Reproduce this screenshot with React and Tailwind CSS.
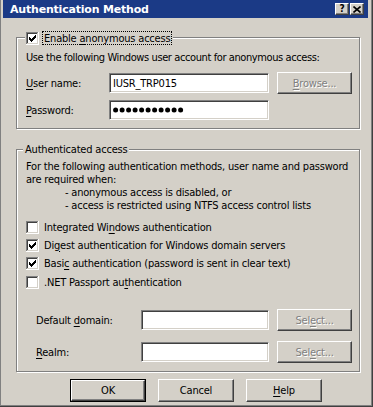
import React from 'react'

const FONT = "font-['DejaVu_Sans_Condensed','Liberation_Sans',sans-serif]"

function Check({ checked }) {
  return (
    <svg width="13" height="13" viewBox="0 0 13 13" className="shrink-0" shapeRendering="crispEdges">
      <rect x="0" y="0" width="13" height="13" fill="#fff" />
      <rect x="0" y="0" width="12" height="1" fill="#808080" />
      <rect x="0" y="0" width="1" height="12" fill="#808080" />
      <rect x="1" y="1" width="10" height="1" fill="#404040" />
      <rect x="1" y="1" width="1" height="10" fill="#404040" />
      <rect x="1" y="11" width="11" height="1" fill="#d4d0c8" />
      <rect x="11" y="1" width="1" height="11" fill="#d4d0c8" />
      {checked && (
        <g fill="#000">
          <rect x="3" y="5" width="1" height="3" />
          <rect x="4" y="6" width="1" height="3" />
          <rect x="5" y="7" width="1" height="3" />
          <rect x="6" y="6" width="1" height="3" />
          <rect x="7" y="5" width="1" height="3" />
          <rect x="8" y="4" width="1" height="3" />
          <rect x="9" y="3" width="1" height="3" />
        </g>
      )}
    </svg>
  )
}

function U({ children }) {
  return <span className="underline underline-offset-[2px]">{children}</span>
}

function Field({ width, children }) {
  return (
    <div
      className={`${width} h-[20px] bg-white border border-t-[#808080] border-l-[#808080] border-r-white border-b-white shadow-[inset_1px_1px_0_#404040,inset_-1px_-1px_0_#d4d0c8] flex items-center pl-[3px] text-[11px] leading-none`}
    >
      {children}
    </div>
  )
}

function Btn({ children, disabled, def, className = '' }) {
  const face = (
    <div
      className={`w-full h-full flex items-center justify-center border border-t-white border-l-white border-r-[#404040] border-b-[#404040] shadow-[inset_-1px_-1px_0_#808080] bg-[#d4d0c8] text-[11px] ${
        disabled ? 'text-[#808080] [text-shadow:1px_1px_0_#fff]' : 'text-black'
      }`}
    >
      <span>{children}</span>
    </div>
  )
  if (def) {
    return <div className={`border border-black ${className}`}>{face}</div>
  }
  return <div className={className}>{face}</div>
}

function Group({ legend, className = '', children }) {
  return (
    <div
      className={`w-[344px] ml-[13px] border border-[#808080] shadow-[inset_1px_1px_0_#fff,1px_1px_0_#fff] ${className}`}
    >
      {legend}
      {children}
    </div>
  )
}

function Dots() {
  return (
    <svg width="74" height="6" viewBox="0 0 74 6">
      {[...Array(11)].map((_, i) => (
        <circle key={i} cx={2.6 + i * 6.5} cy="3" r="2.5" fill="#000" />
      ))}
    </svg>
  )
}

export default function App() {
  return (
    <div
      className={`w-[373px] h-[407px] bg-[#d4d0c8] text-black ${FONT} text-[11px] leading-[13px] tracking-[-0.2px] whitespace-nowrap pl-[3px] pr-[5px] shadow-[inset_-1px_-1px_0_#404040,inset_-2px_-2px_0_#808080,inset_1px_0_0_#808080] overflow-hidden`}
    >
      {/* Title bar */}
      <div className="h-[18px] bg-[#1b3a86] flex items-center pl-[7px] pr-[4px]">
        <span className="text-white font-bold text-[11px] flex-1 font-['DejaVu_Sans','Liberation_Sans',sans-serif] tracking-[-0.2px]">
          Authentication Method
        </span>
        <div className="w-[14px] h-[12px] bg-[#d4d0c8] border border-t-white border-l-white border-r-[#404040] border-b-[#404040] shadow-[inset_-1px_-1px_0_#808080] flex items-center justify-center text-[10px] font-bold leading-none mr-[1px] tracking-normal">
          ?
        </div>
        <div className="w-[14px] h-[12px] bg-[#d4d0c8] border border-t-white border-l-white border-r-[#404040] border-b-[#404040] shadow-[inset_-1px_-1px_0_#808080] flex items-center justify-center">
          <svg width="8" height="7" viewBox="0 0 8 7">
            <path d="M0.5 0.5 L7.5 6.5 M7.5 0.5 L0.5 6.5" stroke="#000" strokeWidth="1.6" />
          </svg>
        </div>
      </div>

      {/* Anonymous access */}
      <Group
        className="mt-[19px] pb-[7px]"
        legend={
          <div className="-mt-[7px] ml-[8px] w-fit bg-[#d4d0c8] px-[1px] h-[14px] flex items-center gap-[3px]">
            <Check checked />
            <span className="border border-dotted border-black px-[1px] h-[14px] flex items-center">
              <span>
                Enable <U>a</U>nonymous access
              </span>
            </span>
          </div>
        }
      >
        <div className="pl-[9px] mt-[6px] tracking-[-0.4px]">Use the following Windows user account for anonymous access:</div>
        <div className="pl-[9px] mt-[8px] h-[22px] flex items-center">
          <span className="w-[83px]">
            <U>U</U>ser name:
          </span>
          <Field width="w-[160px]">IUSR_TRP015</Field>
          <Btn disabled className="ml-[8px] w-[75px] h-[22px]">
            <U>B</U>rowse...
          </Btn>
        </div>
        <div className="pl-[9px] mt-[5px] h-[22px] flex items-center">
          <span className="w-[83px]">
            <U>P</U>assword:
          </span>
          <Field width="w-[160px]">
            <Dots />
          </Field>
        </div>
      </Group>

      {/* Authenticated access */}
      <Group
        className="mt-[20px] pb-[8px]"
        legend={
          <div className="-mt-[7px] ml-[6px] w-fit bg-[#d4d0c8] px-[2px] h-[13px] flex items-center">
            Authenticated access
          </div>
        }
      >
        <div className="pl-[9px] mt-[4px]">
          <div>For the following authentication methods, user name and password</div>
          <div>are required when:</div>
          <div className="pl-[39px]">- anonymous access is disabled, or</div>
          <div className="pl-[39px]">- access is restricted using NTFS access control lists</div>
        </div>
        <div className="pl-[9px] mt-[6px]">
          <div className="h-[18px] flex items-center gap-[5px]">
            <Check />
            <span>
              Integrated Wi<U>n</U>dows authentication
            </span>
          </div>
          <div className="h-[18px] flex items-center gap-[5px]">
            <Check checked />
            <span>
              Di<U>g</U>est authentication for Windows domain servers
            </span>
          </div>
          <div className="h-[19px] flex items-center gap-[5px]">
            <Check checked />
            <span>
              Basi<U>c</U> authentication (password is sent in clear text)
            </span>
          </div>
          <div className="h-[18px] flex items-center gap-[5px]">
            <Check />
            <span>
              .NET Passport au<U>t</U>hentication
            </span>
          </div>
        </div>
        <div className="pl-[19px] mt-[18px] h-[22px] flex items-center">
          <span className="w-[105px]">
            Default <U>d</U>omain:
          </span>
          <Field width="w-[128px]" />
          <Btn disabled className="ml-[8px] w-[75px] h-[22px]">
            Sel<U>e</U>ct...
          </Btn>
        </div>
        <div className="pl-[19px] mt-[10px] h-[22px] flex items-center">
          <span className="w-[105px]">
            <U>R</U>ealm:
          </span>
          <Field width="w-[128px]" />
          <Btn disabled className="ml-[8px] w-[75px] h-[22px]">
            Sel<U>e</U>ct...
          </Btn>
        </div>
      </Group>

      {/* Dialog buttons */}
      <div className="mt-[7px] ml-[67px] flex gap-[12px]">
        <Btn def className="w-[76px] h-[23px]">OK</Btn>
        <Btn className="w-[76px] h-[23px]">Cancel</Btn>
        <Btn className="w-[76px] h-[23px]">
          <U>H</U>elp
        </Btn>
      </div>
    </div>
  )
}
